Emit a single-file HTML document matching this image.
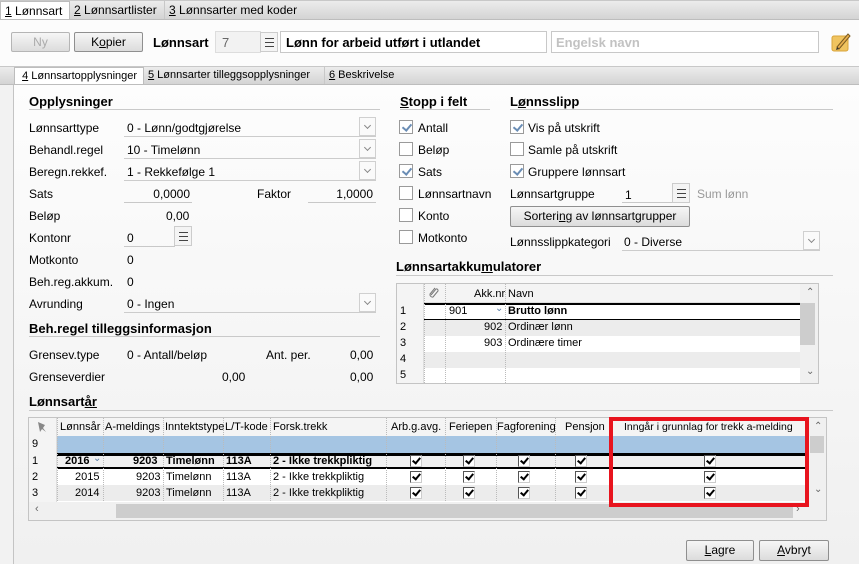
<!DOCTYPE html>
<html><head><meta charset="utf-8"><style>
*{box-sizing:border-box;margin:0;padding:0}
body{width:859px;height:564px;overflow:hidden;font-family:"Liberation Sans",Arial,sans-serif;font-size:12px;color:#000;background:#f2f2f2;position:relative}
.a{position:absolute;white-space:nowrap}
.b{font-weight:bold}
.tabbar{position:absolute;left:0;width:859px;background:linear-gradient(#ececec,#d4d4d4);border-top:1px solid #c8c8c8;border-bottom:1px solid #bdbdbd;white-space:nowrap}
.tab{position:absolute;top:0;height:100%;padding:2px 4px;border-right:1px solid #c8c8c8;white-space:nowrap}
.tab.on{background:#fff;border:1px solid #bdbdbd;border-bottom:none}
.btn{position:absolute;border:1px solid #8f8f8f;border-radius:2px;background:linear-gradient(#f6f6f6,#dcdcdc);text-align:center;line-height:18px}
.fld{position:absolute;border-bottom:1px solid #c8c8c8}
.dd{position:absolute;height:20px;border-bottom:1px solid #ccc}
.dd i{position:absolute;right:0;top:0;width:17px;height:19px;border:1px solid #d0d0d0;background:#fafafa}
.dd i:after{content:"";position:absolute;left:5px;top:5px;width:4px;height:4px;border-right:1px solid #888;border-bottom:1px solid #888;transform:rotate(45deg)}
.hl{position:absolute;height:1px;background:#c9c9c9}
.cb{position:absolute;width:14px;height:14px;border:1px solid #9a9a9a;background:#fff}
.cb.c:after{content:"";position:absolute;left:4px;top:1px;width:4px;height:7px;border-right:2px solid #6a8db5;border-bottom:2px solid #6a8db5;transform:rotate(40deg)}
.ck{position:absolute;width:12px;height:12px;border:1px solid #555;border-right-color:#ccc;border-bottom-color:#ccc;background:#fff}
.ck:after{content:"";position:absolute;left:3px;top:0;width:3px;height:6px;border-right:2px solid #000;border-bottom:2px solid #000;transform:rotate(40deg)}
.menu{position:absolute;width:18px;height:20px;border:1px solid #ccc;background:#f4f4f4}
.menu:after{content:"";position:absolute;left:4px;top:5px;width:9px;height:9px;background:linear-gradient(#444 0,#444 1px,transparent 1px,transparent 4px,#444 4px,#444 5px,transparent 5px,transparent 8px,#444 8px,#444 9px)}
.u{text-decoration:underline}
.grid{position:absolute;background:#fff;border:1px solid #c4c4c4}
.row{position:absolute;left:0;right:0}
.vl{position:absolute;top:0;bottom:0;border-left:1px dotted #bbb}
.gray{color:#999}
.g2{font-size:11px}
</style></head><body>
<div class="tabbar" style="top:0;height:20px">
<div class="tab on" style="left:0;width:70px"><span class="u">1</span> Lønnsart</div>
<div class="tab" style="left:70px;width:95px"><span class="u">2</span> Lønnsartlister</div>
<div class="tab" style="left:165px;width:160px;border-right:none"><span class="u">3</span> Lønnsarter med koder</div>
</div>
<div class="a" style="left:0;top:20px;width:859px;height:46px;background:#fcfcfc"></div>
<div class="btn" style="left:11px;top:32px;width:59px;height:20px;color:#aaa;border-color:#b5b5b5">Ny</div>
<div class="btn" style="left:74px;top:32px;width:69px;height:20px">K<span class="u">o</span>pier</div>
<div class="a b" style="left:153px;top:35px;font-size:13px">Lønnsart</div>
<div class="a" style="left:215px;top:31px;width:46px;height:22px;background:#f2f2f2;border:1px solid #ddd;padding:3px 6px;color:#666;font-size:13px">7</div>
<div class="menu" style="left:260px;top:32px"></div>
<div class="a b" style="left:280px;top:31px;width:267px;height:22px;border:1px solid #c8c8c8;background:#fff;padding:3px 5px;font-size:13px">Lønn for arbeid utført i utlandet</div>
<div class="a b" style="left:551px;top:31px;width:268px;height:22px;border:1px solid #c8c8c8;background:#fff;padding:3px 4px;font-size:13px;color:#c2c2c2">Engelsk navn</div>
<svg class="a" style="left:831px;top:31px" width="21" height="22"><rect x="1" y="5" width="16" height="15" rx="2" fill="#f0c460" stroke="#d9a43a"/><path d="M6 16 L17 3 L19 5 L8 18 Z" fill="#e9b04d" stroke="#7a5a20" stroke-width="1"/><path d="M6 16 L5 19 L8 18" fill="#333"/></svg>
<div class="tabbar" style="top:66px;height:19px;font-size:11px">
<div class="tab on" style="left:14px;width:130px">&nbsp;<span class="u">4</span> Lønnsartopplysninger</div>
<div class="tab" style="left:144px;width:181px"><span class="u">5</span> Lønnsarter tilleggsopplysninger</div>
<div class="tab" style="left:325px;width:90px;border-right:none"><span class="u">6</span> Beskrivelse</div>
</div>
<div class="a" style="left:13px;top:85px;width:846px;height:479px;background:linear-gradient(#fdfdfd,#f0f0f0);border-left:1px solid #c4c4c4"></div>

<div class="a b" style="left:29px;top:94px;font-size:13px">Opplysninger</div>
<div class="hl" style="left:29px;top:109px;width:351px"></div>
<div class="a" style="left:29px;top:121px">Lønnsarttype</div>
<div class="dd" style="left:124px;top:117px;width:252px"><span class="a" style="left:3px;top:4px">0 - Lønn/godtgjørelse</span><i></i></div>
<div class="a" style="left:29px;top:143px">Behandl.regel</div>
<div class="dd" style="left:124px;top:139px;width:252px"><span class="a" style="left:3px;top:4px">10 - Timelønn</span><i></i></div>
<div class="a" style="left:29px;top:165px">Beregn.rekkef.</div>
<div class="dd" style="left:124px;top:161px;width:252px"><span class="a" style="left:3px;top:4px">1 - Rekkefølge 1</span><i></i></div>
<div class="a" style="left:29px;top:187px">Sats</div>
<div class="fld" style="left:124px;top:183px;width:68px;height:20px;text-align:right;padding:4px 2px 0 0">0,0000</div>
<div class="a" style="left:257px;top:187px">Faktor</div>
<div class="fld" style="left:308px;top:183px;width:68px;height:20px;text-align:right;padding:4px 3px 0 0">1,0000</div>
<div class="a" style="left:29px;top:209px">Beløp</div>
<div class="a" style="left:166px;top:209px">0,00</div>
<div class="a" style="left:29px;top:231px">Kontonr</div>
<div class="fld" style="left:124px;top:227px;width:51px;height:20px;padding:4px 3px 0">0</div>
<div class="menu" style="left:174px;top:226px"></div>
<div class="a" style="left:29px;top:253px">Motkonto</div><div class="a" style="left:127px;top:253px">0</div>
<div class="a" style="left:29px;top:275px">Beh.reg.akkum.</div><div class="a" style="left:127px;top:275px">0</div>
<div class="a" style="left:29px;top:297px">Avrunding</div>
<div class="dd" style="left:124px;top:293px;width:252px"><span class="a" style="left:3px;top:4px">0 - Ingen</span><i></i></div>
<div class="a b" style="left:29px;top:321px;font-size:13px">Beh.regel tilleggsinformasjon</div>
<div class="hl" style="left:29px;top:336px;width:351px"></div>
<div class="a" style="left:29px;top:348px">Grensev.type</div>
<div class="a" style="left:127px;top:348px">0 - Antall/beløp</div>
<div class="a" style="left:266px;top:348px">Ant. per.</div>
<div class="a" style="left:350px;top:348px">0,00</div>
<div class="a" style="left:29px;top:370px">Grenseverdier</div>
<div class="a" style="left:222px;top:370px">0,00</div>
<div class="a" style="left:350px;top:370px">0,00</div>

<div class="a b" style="left:400px;top:94px;font-size:13px"><span class="u">S</span>topp i felt</div>
<div class="hl" style="left:400px;top:109px;width:90px"></div>
<div class="cb c" style="left:399px;top:120px"></div><div class="a" style="left:418px;top:121px">Antall</div>
<div class="cb" style="left:399px;top:142px"></div><div class="a" style="left:418px;top:143px">Beløp</div>
<div class="cb c" style="left:399px;top:164px"></div><div class="a" style="left:418px;top:165px">Sats</div>
<div class="cb" style="left:399px;top:186px"></div><div class="a" style="left:418px;top:187px">Lønnsartnavn</div>
<div class="cb" style="left:399px;top:208px"></div><div class="a" style="left:418px;top:209px">Konto</div>
<div class="cb" style="left:399px;top:230px"></div><div class="a" style="left:418px;top:231px">Motkonto</div>

<div class="a b" style="left:510px;top:94px;font-size:13px">L<span class="u">ø</span>nnsslipp</div>
<div class="hl" style="left:510px;top:109px;width:323px"></div>
<div class="cb c" style="left:510px;top:120px"></div><div class="a" style="left:528px;top:121px">Vis på utskrift</div>
<div class="cb" style="left:510px;top:142px"></div><div class="a" style="left:528px;top:143px">Samle på utskrift</div>
<div class="cb c" style="left:510px;top:164px"></div><div class="a" style="left:528px;top:165px">Gruppere lønnsart</div>
<div class="a" style="left:510px;top:187px">Lønnsartgruppe</div>
<div class="fld" style="left:622px;top:183px;width:51px;height:20px;padding:5px 3px 0">1</div>
<div class="menu" style="left:672px;top:183px"></div>
<div class="a gray" style="left:697px;top:187px">Sum lønn</div>
<div class="btn" style="left:510px;top:206px;width:180px;height:21px">Sorteri<span class="u">ng</span> av lønnsartgrupper</div>
<div class="a" style="left:510px;top:235px">Lønnsslippkategori</div>
<div class="dd" style="left:622px;top:231px;width:198px"><span class="a" style="left:2px;top:4px">0 - Diverse</span><i></i></div>

<div class="a b" style="left:396px;top:259px;font-size:13px">Lønnsartakku<span class="u">m</span>ulatorer</div>
<div class="hl" style="left:396px;top:275px;width:437px"></div>
<div class="grid g2" style="left:396px;top:283px;width:423px;height:101px">
<div class="row" style="top:0;height:19px;background:#f4f4f4;border-bottom:1px solid #ddd"></div>
<div class="row" style="top:19px;height:17px;border-top:2px solid #000;border-bottom:1px solid #000;width:403px"></div>
<div class="row" style="top:36px;height:16px;background:#ececec;width:403px"></div>
<div class="row" style="top:68px;height:16px;background:#ececec;width:403px"></div>
<div class="a" style="left:0;top:0;width:27px;height:99px;background:#f4f4f4;border-right:1px solid #ddd"></div>
<div class="vl" style="left:27px"></div><div class="vl" style="left:48px"></div><div class="vl" style="left:108px"></div>
<div class="a" style="left:403px;top:0;width:18px;height:99px;background:#f0f0f0"></div>
<div class="a" style="left:403px;top:19px;width:15px;height:42px;background:#cdcdcd"></div>
<div class="a" style="left:409px;top:3px;color:#666;font-size:10px">&#8963;</div>
<div class="a" style="left:409px;top:82px;color:#666;font-size:10px">&#8964;</div>
<svg class="a" style="left:31px;top:2px" width="12" height="12"><path d="M3 9 L8 3 A1.6 1.6 0 0 1 10 5 L5 11 A2.5 2.5 0 0 1 2 8 L7 2" fill="none" stroke="#777"/></svg>
<div class="a" style="left:77px;top:4px">Akk.nr</div><div class="a" style="left:111px;top:4px">Navn</div>
<div class="a" style="left:3px;top:21px">1</div><div class="a" style="left:52px;top:21px">901</div><div class="a" style="left:98px;top:19px;color:#5a7fa8;font-size:10px">&#8964;</div><div class="a b" style="left:111px;top:21px">Brutto lønn</div>
<div class="a" style="left:3px;top:37px">2</div><div class="a" style="left:87px;top:37px">902</div><div class="a" style="left:111px;top:37px">Ordinær lønn</div>
<div class="a" style="left:3px;top:53px">3</div><div class="a" style="left:87px;top:53px">903</div><div class="a" style="left:111px;top:53px">Ordinære timer</div>
<div class="a" style="left:3px;top:69px">4</div><div class="a" style="left:3px;top:85px">5</div>
</div>

<div class="a b" style="left:29px;top:394px;font-size:13px">Lønnsart<span class="u">år</span></div>
<div class="hl" style="left:29px;top:410px;width:804px"></div>
<div class="grid g2" style="left:28px;top:417px;width:799px;height:104px">
<div class="row" style="top:0;height:18px;background:#f4f4f4"></div>
<div class="row" style="top:18px;height:17px;background:#a5c5e3;width:780px"></div>
<div class="row" style="top:35px;height:16px;border-top:3px solid #000;border-bottom:2px solid #000;background:#f0f0f0;width:780px"></div>
<div class="row" style="top:67px;height:16px;background:#ececec;width:780px"></div>
<div class="a" style="left:0;top:0;width:28px;height:84px;background:#f4f4f4;border-right:1px solid #ddd"></div>
<div class="vl" style="left:28px;bottom:19px"></div><div class="vl" style="left:74px;bottom:19px"></div><div class="vl" style="left:134px;bottom:19px"></div><div class="vl" style="left:194px;bottom:19px"></div><div class="vl" style="left:241px;bottom:19px"></div><div class="vl" style="left:357px;bottom:19px"></div><div class="vl" style="left:416px;bottom:19px"></div><div class="vl" style="left:467px;bottom:19px"></div><div class="vl" style="left:526px;bottom:19px"></div><div class="vl" style="left:581px;bottom:19px"></div>
<svg class="a" style="left:6px;top:2px" width="14" height="14"><path d="M3 2 L10 5 L8 8 L11 12 L7 9 L5 12 Z" fill="#888"/></svg>
<div class="a" style="left:31px;top:3px">Lønnsår</div><div class="a" style="left:76px;top:3px">A-meldings</div><div class="a" style="left:136px;top:3px">Inntektstype</div><div class="a" style="left:196px;top:3px">L/T-kode</div><div class="a" style="left:244px;top:3px">Forsk.trekk</div><div class="a" style="left:362px;top:3px">Arb.g.avg.</div><div class="a" style="left:420px;top:3px">Feriepen</div><div class="a" style="left:468px;top:3px">Fagforening</div><div class="a" style="left:536px;top:3px">Pensjon</div><div class="a" style="left:595px;top:3px;font-size:10.5px">Inngår i grunnlag for trekk a-melding</div>
<div class="a" style="left:3px;top:20px">9</div>
<div class="a" style="left:3px;top:37px">1</div><div class="a b" style="left:36px;top:37px">2016</div><div class="a" style="left:64px;top:35px;color:#5a7fa8;font-size:10px">&#8964;</div><div class="a b" style="left:104px;top:37px">9203</div><div class="a b" style="left:137px;top:37px">Timelønn</div><div class="a b" style="left:197px;top:37px">113A</div><div class="a b" style="left:244px;top:37px">2 - Ikke trekkpliktig</div>
<div class="a" style="left:3px;top:53px">2</div><div class="a" style="left:46px;top:53px">2015</div><div class="a" style="left:107px;top:53px">9203</div><div class="a" style="left:137px;top:53px">Timelønn</div><div class="a" style="left:197px;top:53px">113A</div><div class="a" style="left:244px;top:53px">2 - Ikke trekkpliktig</div>
<div class="a" style="left:3px;top:69px">3</div><div class="a" style="left:46px;top:69px">2014</div><div class="a" style="left:107px;top:69px">9203</div><div class="a" style="left:137px;top:69px">Timelønn</div><div class="a" style="left:197px;top:69px">113A</div><div class="a" style="left:244px;top:69px">2 - Ikke trekkpliktig</div>
<div class="ck" style="left:381px;top:37px"></div><div class="ck" style="left:434px;top:37px"></div><div class="ck" style="left:489px;top:37px"></div><div class="ck" style="left:546px;top:37px"></div><div class="ck" style="left:675px;top:37px"></div>
<div class="ck" style="left:381px;top:53px"></div><div class="ck" style="left:434px;top:53px"></div><div class="ck" style="left:489px;top:53px"></div><div class="ck" style="left:546px;top:53px"></div><div class="ck" style="left:675px;top:53px"></div>
<div class="ck" style="left:381px;top:69px"></div><div class="ck" style="left:434px;top:69px"></div><div class="ck" style="left:489px;top:69px"></div><div class="ck" style="left:546px;top:69px"></div><div class="ck" style="left:675px;top:69px"></div>
<div class="a" style="left:0;top:84px;width:780px;height:18px;background:#f0f0f0"></div>
<div class="a" style="left:87px;top:86px;width:677px;height:14px;background:#cdcdcd"></div>
<div class="a" style="left:6px;top:85px;color:#666">&lsaquo;</div><div class="a" style="left:767px;top:85px;color:#666">&rsaquo;</div>
<div class="a" style="left:780px;top:0;width:17px;height:102px;background:#f0f0f0"></div>
<div class="a" style="left:781px;top:18px;width:14px;height:17px;background:#cdcdcd"></div>
<div class="a" style="left:785px;top:3px;color:#666;font-size:10px">&#8963;</div>
<div class="a" style="left:785px;top:66px;color:#666;font-size:10px">&#8964;</div>
</div>
<div class="a" style="left:609px;top:417px;width:200px;height:90px;border:4px solid #e8141e"></div>

<div class="btn" style="left:686px;top:540px;width:68px;height:21px"><span class="u">L</span>agre</div>
<div class="btn" style="left:759px;top:540px;width:70px;height:21px"><span class="u">A</span>vbryt</div>
</body></html>
